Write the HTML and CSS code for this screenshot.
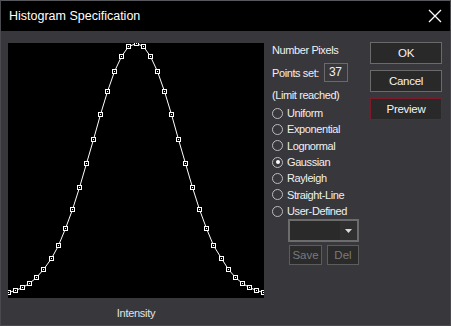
FILE: index.html
```html
<!DOCTYPE html>
<html lang="en">
<head>
    <meta charset="UTF-8">
    <title>Histogram Specification</title>
    <link rel="stylesheet" href="styles.css">
</head>
<body>

<div class="window">
    <div class="titlebar">
        <span class="title">Histogram Specification</span>
        <svg class="close" width="14" height="14" viewBox="0 0 14 14">
            <path d="M1 1 L13 13 M13 1 L1 13" stroke="#fff" stroke-width="1.3" fill="none"/>
        </svg>
    </div>

    <div class="content">
        <div class="plotColumn">
            <svg id="plot" class="plot" width="256" height="255" viewBox="0 0 256 255"></svg>
            <div class="axisLabel">Intensity</div>
        </div>

        <div class="options">
            <div class="line">Number Pixels</div>
            <div class="pointsRow">
                <span>Points set:</span>
                <span class="countBox">37</span>
            </div>
            <div class="line limit">(Limit reached)</div>

            <div class="radioList">
                <label class="radio"><span class="dot"></span>Uniform</label>
                <label class="radio"><span class="dot"></span>Exponential</label>
                <label class="radio"><span class="dot"></span>Lognormal</label>
                <label class="radio checked"><span class="dot"></span>Gaussian</label>
                <label class="radio"><span class="dot"></span>Rayleigh</label>
                <label class="radio"><span class="dot"></span>Straight-Line</label>
                <label class="radio"><span class="dot"></span>User-Defined</label>
            </div>

            <div class="combo">
                <span class="comboArrow">
                    <svg width="7" height="4" viewBox="0 0 7 4"><path d="M0 0 H7 L3.5 4 Z" fill="#ddd"/></svg>
                </span>
            </div>
            <div class="smallButtons">
                <button class="small save" disabled>Save</button>
                <button class="small del" disabled>Del</button>
            </div>
        </div>

        <div class="buttons">
            <button class="btn">OK</button>
            <button class="btn">Cancel</button>
            <button class="btn preview">Preview</button>
        </div>
    </div>
</div>

<script>
    // gaussian curve, 37 points
    var svg = document.getElementById("plot");
    var ns = "http://www.w3.org/2000/svg";
    var count = 37;
    var sigma = 43.6;
    var pts = [];
    for (var i = 0; i < count; i++) {
        var x = i * 255 / (count - 1);
        var g = Math.exp(-Math.pow(x - 127.5, 2) / (2 * sigma * sigma));
        pts.push([Math.round(x), Math.round((1 - g) * 253)]);
    }

    var line = document.createElementNS(ns, "polyline");
    line.setAttribute("points", pts.map(function (p) { return (p[0] + 0.5) + "," + (p[1] + 0.5); }).join(" "));
    line.setAttribute("class", "curve");
    svg.appendChild(line);

    pts.forEach(function (p) {
        var box = document.createElementNS(ns, "rect");
        box.setAttribute("x", p[0] - 1.5);
        box.setAttribute("y", p[1] - 1.5);
        box.setAttribute("width", 4);
        box.setAttribute("height", 4);
        box.setAttribute("class", "marker");
        svg.appendChild(box);

        var dot = document.createElementNS(ns, "rect");
        dot.setAttribute("x", p[0]);
        dot.setAttribute("y", p[1]);
        dot.setAttribute("width", 1);
        dot.setAttribute("height", 1);
        dot.setAttribute("fill", "#fff");
        svg.appendChild(dot);
    });
</script>
</body>
</html>
```

FILE: styles.css
```css
/* dialog styles */
body {
    margin: 0;
    background: #38373c;
    font-family: "Liberation Sans", Arial, sans-serif;
    color: #f0f0f0;
}

.window {
    width: 451px;
    height: 326px;
    box-sizing: border-box;
    border: 1px solid #4a4a4e;
    border-top-color: #58585c;
    background: #38373c;
}

.titlebar {
    height: 30px;
    background: #000;
    display: flex;
    align-items: center;
    justify-content: space-between;
    padding: 0 8px;
}

.title {
    font-size: 12.5px;
    color: #fff;
}

.close {
    margin-right: 0;
}

.content {
    display: flex;
    padding: 12px 0 0 7px;
}

.plotColumn {
    width: 256px;
    display: flex;
    flex-direction: column;
    align-items: center;
}

.plot {
    display: block;
    background: #000;
    shape-rendering: crispEdges;
}

.curve {
    fill: none;
    stroke: #fff;
    stroke-width: 1;
    shape-rendering: auto;
}

.marker {
    fill: #000;
    stroke: #fff;
    stroke-width: 1;
}

.axisLabel {
    margin-top: 9px;
    font-size: 11px;
    letter-spacing: -0.3px;
    color: #e4e4e4;
}

.options {
    width: 98px;
    margin-left: 8px;
    padding-top: -1px;
    font-size: 11px;
    letter-spacing: -0.4px;
}

.line {
    height: 14px;
    line-height: 14px;
}

.pointsRow {
    display: flex;
    align-items: center;
    margin-top: 6px;
    height: 19px;
}

.countBox {
    margin-left: 5px;
    width: 24px;
    height: 19px;
    box-sizing: border-box;
    border: 1px solid #6a6a6a;
    line-height: 17px;
    padding-left: 4px;
    font-size: 12px;
}

.limit {
    margin-top: 6px;
}

.radioList {
    margin-top: 3px;
    display: grid;
    grid-auto-rows: 16.33px;
}

.radio {
    display: flex;
    align-items: center;
}

.dot {
    width: 11px;
    height: 11px;
    box-sizing: border-box;
    border: 1px solid #bdbdbd;
    border-radius: 50%;
    margin-right: 4px;
    position: relative;
}

.radio.checked .dot::after {
    content: "";
    position: absolute;
    left: 2.5px;
    top: 2.5px;
    width: 4px;
    height: 4px;
    border-radius: 50%;
    background: #fff;
}

.combo {
    margin-left: 16px;
    width: 71px;
    height: 23px;
    box-sizing: border-box;
    border: 2px solid #6c6c6c;
    background: #2a2a2b;
    display: flex;
    justify-content: flex-end;
}

.comboArrow {
    width: 17px;
    background: #303031;
    display: flex;
    align-items: center;
    justify-content: center;
}

.smallButtons {
    display: flex;
    margin-top: 3px;
    margin-left: 17px;
    gap: 5px;
}

.small {
    height: 20px;
    box-sizing: border-box;
    border: 1px solid #5c5c5c;
    background: #2b2b2c;
    color: #7a7a7a;
    font-family: "Liberation Sans", Arial, sans-serif;
    font-size: 11.5px;
    padding: 0;
}

.save {
    width: 33px;
}

.del {
    width: 32px;
}

.buttons {
    margin-left: 0;
    display: flex;
    flex-direction: column;
    gap: 6px;
    padding-top: -1px;
    margin-top: -1px;
}

.btn {
    width: 72px;
    height: 22px;
    box-sizing: border-box;
    border: 1px solid #6a6a6a;
    background: #29292a;
    color: #f4f4f4;
    font-family: "Liberation Sans", Arial, sans-serif;
    font-size: 11.5px;
    letter-spacing: -0.3px;
    padding: 0;
}

.preview {
    border-color: #7e1b2a;
}
```
